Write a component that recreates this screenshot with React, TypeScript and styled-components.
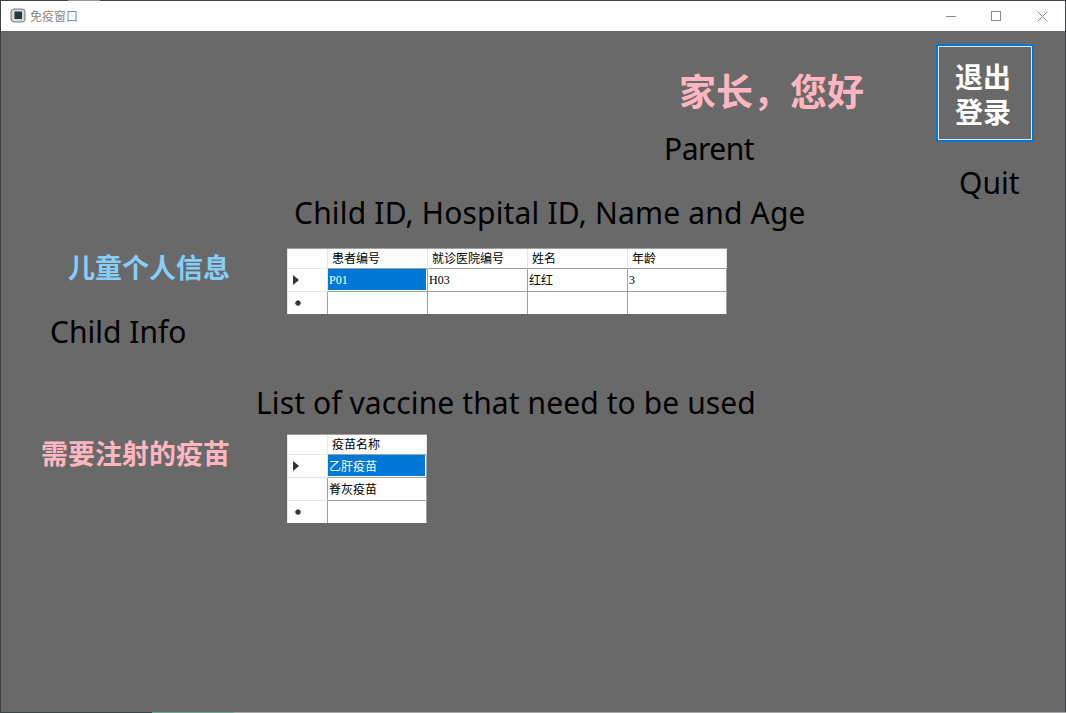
import * as React from "react";
import styled, { createGlobalStyle } from "styled-components";

const cjk = `"Noto Sans CJK SC", "Noto Sans", sans-serif`;

const GlobalStyle = createGlobalStyle`
  html, body {
    margin: 0;
    padding: 0;
    background: #696969;
    overflow: hidden;
  }
`;

const Win = styled.div`
  width: 1066px;
  height: 713px;
  display: flex;
  flex-direction: column;
  box-sizing: border-box;
  border-left: 1px solid #3c4648;
  border-right: 1px solid #3c4648;
  font-family: ${cjk};
`;

const Strip = styled.div`
  height: 1px;
  flex: none;
  margin: 0 -1px;
  display: flex;
`;

const StripPart = styled.div<{ $w?: number; $c: string }>`
  height: 1px;
  background: ${(p) => p.$c};
  ${(p) => (p.$w ? `width: ${p.$w}px;` : "flex: 1;")}
`;

const TitleBar = styled.div`
  height: 30px;
  flex: none;
  background: #fff;
  display: flex;
  align-items: center;
  padding-left: 9px;
`;

const TitleText = styled.span`
  font-size: 12px;
  color: #8a8a8a;
  margin: 0 0 2px 4px;
`;

const WinControls = styled.div`
  margin-left: auto;
  display: flex;
`;

const WinControl = styled.div<{ $w: number }>`
  width: ${(p) => p.$w}px;
  height: 30px;
  display: flex;
  align-items: center;
  justify-content: center;
`;

const Canvas = styled.main`
  flex: 1;
  background: #696969;
  padding-top: 13px;
  min-height: 0;
`;

const Note = styled.div<{ $track?: number }>`
  font-family: "Noto Sans", sans-serif;
  font-size: 30px;
  line-height: 40px;
  color: #000;
  white-space: nowrap;
  letter-spacing: ${(p) => p.$track ?? 0}px;
`;

const TopRow = styled.div`
  display: flex;
  height: 149px;
`;

const GreetBlock = styled.div`
  margin-left: 663px;
  padding-top: 21px;
`;

const Greeting = styled.div`
  margin-left: 15px;
  font-size: 37px;
  font-weight: 700;
  line-height: 50px;
  color: #ffb6c1;
  white-space: nowrap;
`;

const ParentNote = styled(Note)`
  margin-top: 14px;
`;

const QuitBlock = styled.div`
  margin-left: auto;
  margin-right: 31px;
  width: 98px;
`;

const QuitButton = styled.button`
  display: block;
  width: 98px;
  height: 98px;
  box-sizing: border-box;
  padding: 2px 4px 0 0;
  background: #696969;
  border: 2px solid #0078d7;
  outline: 1px solid #e3e3e3;
  outline-offset: -3px;
  color: #fff;
  font-family: ${cjk};
  font-size: 28px;
  font-weight: 700;
  line-height: 35px;
`;

const QuitNote = styled(Note)`
  margin: 21px 0 0 23px;
`;

const Section = styled.section<{ $top?: number }>`
  display: grid;
  grid-template-columns: 229px auto;
  column-gap: 57px;
  align-items: start;
  margin-top: ${(p) => p.$top ?? 0}px;
`;

const SectionNote = styled(Note)<{ $x: number }>`
  grid-column: 1 / 3;
  margin-left: ${(p) => p.$x}px;
`;

const SideColumn = styled.div`
  display: flex;
  flex-direction: column;
`;

const SideLabel = styled.div<{ $color: string; $top: number }>`
  text-align: right;
  font-size: 27px;
  font-weight: 700;
  line-height: 36px;
  color: ${(p) => p.$color};
  margin-top: ${(p) => p.$top}px;
  white-space: nowrap;
`;

const ChildNote = styled(Note)`
  margin: 27px 0 0 49px;
`;

// widths: row header 41, every column 100 except the last one (99)
const Grid = styled.div<{ $cols: number; $rows: number; $top: number }>`
  display: grid;
  grid-template-columns: 41px ${(p) => "100px ".repeat(p.$cols - 1)}99px;
  grid-template-rows: 20px ${(p) => "23px ".repeat(p.$rows - 1)}22px;
  width: max-content;
  background: #fff;
  border-top: 1px solid #a0a0a0;
  box-shadow: inset 1px 0 0 #e6e6e6;
  margin-top: ${(p) => p.$top}px;
  font-size: 12px;
  line-height: 16px;
  color: #000;
`;

const Corner = styled.div`
  border-right: 1px solid #e6e6e6;
  border-bottom: 1px solid #e6e6e6;
`;

const HeadCell = styled.div`
  box-sizing: border-box;
  padding: 1px 0 0 4px;
  border-right: 1px solid #e6e6e6;
  border-bottom: 1px solid #a0a0a0;
  white-space: nowrap;
`;

const RowHead = styled.div<{ $active?: boolean; $last?: boolean }>`
  box-sizing: border-box;
  border-right: 1px solid ${(p) => (p.$active ? "#e6e6e6" : "#a0a0a0")};
  border-bottom: ${(p) => (p.$last ? "none" : "1px solid #e6e6e6")};
  display: flex;
  align-items: center;
  padding-left: 6px;
`;

const Cell = styled.div<{ $selected?: boolean; $latin?: boolean; $last?: boolean }>`
  box-sizing: border-box;
  padding: 3px 0 0 1px;
  border-right: 1px solid #a0a0a0;
  border-bottom: ${(p) => (p.$last ? "none" : "1px solid #a0a0a0")};
  background: ${(p) => (p.$selected ? "#0078d7" : "#fff")};
  color: ${(p) => (p.$selected ? "#fff" : "#000")};
  white-space: nowrap;
  ${(p) => p.$selected && "box-shadow: inset -1px -1px 0 #fff;"}
  ${(p) => p.$latin && `font-family: "Liberation Serif", serif;`}
`;

const WinIcon = () => (
  <svg width="16" height="16" viewBox="0 0 16 16">
    <rect x="1" y="1" width="14" height="13" rx="3" fill="#d8d8d8" stroke="#777" />
    <rect x="4.5" y="3.5" width="7.5" height="7.5" fill="#1f3a40" />
  </svg>
);

const Minimize = () => (
  <svg width="10" height="10" viewBox="0 0 10 10">
    <path d="M0 5.5H10" stroke="#8c8c8c" />
  </svg>
);

const Maximize = () => (
  <svg width="10" height="10" viewBox="0 0 10 10">
    <rect x="0.5" y="0.5" width="9" height="9" fill="none" stroke="#8c8c8c" />
  </svg>
);

const Close = () => (
  <svg width="11" height="11" viewBox="0 0 11 11">
    <path d="M0.5 0.5L10.5 10.5M10.5 0.5L0.5 10.5" stroke="#8c8c8c" />
  </svg>
);

const Arrow = () => (
  <svg width="6" height="10" viewBox="0 0 6 10">
    <path d="M0 0L6 5L0 10Z" fill="#333" />
  </svg>
);

const Star = () => (
  <svg width="8" height="6" viewBox="0 0 8 6">
    <circle cx="5" cy="3" r="2.6" fill="#444" />
    <path d="M5 0V6M2 3H8M3 1L7 5M7 1L3 5" stroke="#333" strokeWidth="0.8" />
  </svg>
);

export default function App() {
  return (
    <>
      <GlobalStyle />
      <Win>
        <Strip>
          <StripPart $w={68} $c="#3c4648" />
          <StripPart $w={32} $c="#9a9a9a" />
          <StripPart $c="#3c4648" />
        </Strip>
        <TitleBar>
          <WinIcon />
          <TitleText>免疫窗口</TitleText>
          <WinControls>
            <WinControl $w={44}><Minimize /></WinControl>
            <WinControl $w={46}><Maximize /></WinControl>
            <WinControl $w={46}><Close /></WinControl>
          </WinControls>
        </TitleBar>
        <Canvas>
          <TopRow>
            <GreetBlock>
              <Greeting>家长，您好</Greeting>
              <ParentNote $track={-0.5}>Parent</ParentNote>
            </GreetBlock>
            <QuitBlock>
              <QuitButton>退出<br />登录</QuitButton>
              <QuitNote>Quit</QuitNote>
            </QuitBlock>
          </TopRow>

          <Section>
            <SectionNote $x={293} $track={0.18}>Child ID, Hospital ID, Name and Age</SectionNote>
            <SideColumn>
              <SideLabel $color="#87cefa" $top={16}>儿童个人信息</SideLabel>
              <ChildNote>Child Info</ChildNote>
            </SideColumn>
            <Grid $cols={4} $rows={2} $top={15}>
              <Corner />
              <HeadCell>患者编号</HeadCell>
              <HeadCell>就诊医院编号</HeadCell>
              <HeadCell>姓名</HeadCell>
              <HeadCell>年龄</HeadCell>
              <RowHead $active><Arrow /></RowHead>
              <Cell $selected $latin>P01</Cell>
              <Cell $latin>H03</Cell>
              <Cell>红红</Cell>
              <Cell $latin>3</Cell>
              <RowHead $last><Star /></RowHead>
              <Cell $last />
              <Cell $last />
              <Cell $last />
              <Cell $last />
            </Grid>
          </Section>

          <Section $top={31}>
            <SectionNote $x={255} $track={0.1}>List of vaccine that need to be used</SectionNote>
            <SideColumn>
              <SideLabel $color="#ffb6c1" $top={12}>需要注射的疫苗</SideLabel>
            </SideColumn>
            <Grid $cols={1} $rows={3} $top={11}>
              <Corner />
              <HeadCell>疫苗名称</HeadCell>
              <RowHead $active><Arrow /></RowHead>
              <Cell $selected>乙肝疫苗</Cell>
              <RowHead />
              <Cell>脊灰疫苗</Cell>
              <RowHead $last><Star /></RowHead>
              <Cell $last />
            </Grid>
          </Section>
        </Canvas>
        <Strip>
          <StripPart $w={152} $c="#3c4648" />
          <StripPart $w={82} $c="#6fa592" />
          <StripPart $c="#a8a8a8" />
        </Strip>
      </Win>
    </>
  );
}
